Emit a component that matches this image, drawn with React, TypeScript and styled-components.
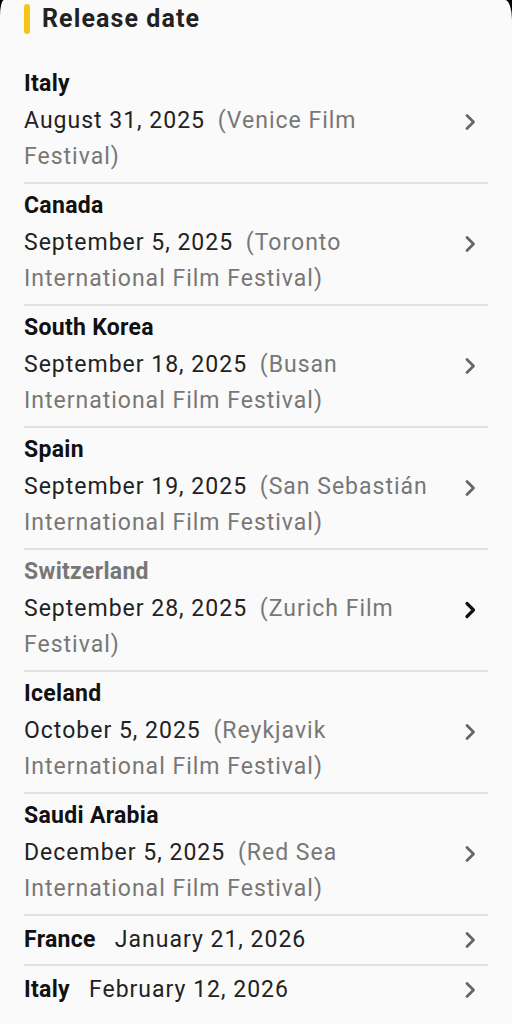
import styled, { createGlobalStyle } from "styled-components";

type Release = {
    id: number;
    country: string;
    date: string;
    venue?: string;
    muted?: boolean;
};

const releases: Release[] = [
    { id: 1, country: "Italy", date: "August 31, 2025", venue: "(Venice Film Festival)" },
    { id: 2, country: "Canada", date: "September 5, 2025", venue: "(Toronto International Film Festival)" },
    { id: 3, country: "South Korea", date: "September 18, 2025", venue: "(Busan International Film Festival)" },
    { id: 4, country: "Spain", date: "September 19, 2025", venue: "(San Sebastián International Film Festival)" },
    { id: 5, country: "Switzerland", date: "September 28, 2025", venue: "(Zurich Film Festival)", muted: true },
    { id: 6, country: "Iceland", date: "October 5, 2025", venue: "(Reykjavik International Film Festival)" },
    { id: 7, country: "Saudi Arabia", date: "December 5, 2025", venue: "(Red Sea International Film Festival)" },
    { id: 8, country: "France", date: "January 21, 2026" },
    { id: 9, country: "Italy", date: "February 12, 2026" }
];

const GlobalStyle = createGlobalStyle`
    html, body {
        margin: 0;
        padding: 0;
        background: #000;
    }
    body {
        font-family: Roboto, "Noto Sans", sans-serif;
    }
`;

const Sheet = styled.div`
    min-height: 1024px;
    background: #fafafa;
    border-top-left-radius: 4px 16px;
    border-top-right-radius: 7px 20px;
    padding: 1px 24px 0;
    box-sizing: border-box;
`;

const Header = styled.div`
    display: flex;
    align-items: center;
    column-gap: 12px;
    height: 36px;
    margin-bottom: 25px;
`;

const Accent = styled.div`
    width: 6px;
    height: 30px;
    border-radius: 3px;
    background: #f5c518;
`;

const HeaderTitle = styled.h2`
    margin: 0;
    font-size: 25px;
    line-height: 36px;
    font-weight: 700;
    letter-spacing: 1.1px;
    color: #222222;
`;

const List = styled.div`
    display: flex;
    flex-direction: column;
`;

const Row = styled.div<{ $inline?: boolean }>`
    display: flex;
    align-items: ${({ $inline }) => ($inline ? "center" : "flex-start")};
    column-gap: 12px;
    padding: ${({ $inline }) => ($inline ? "6px 6px 6px 0" : "7px 6px 7px 0")};
    border-bottom: 2px solid #e2e2e2;

    &:last-child {
        border-bottom: none;
    }
`;

const RowText = styled.div<{ $inline?: boolean }>`
    flex: 1;
    display: flex;
    flex-direction: ${({ $inline }) => ($inline ? "row" : "column")};
    align-items: ${({ $inline }) => ($inline ? "center" : "stretch")};
    column-gap: 19px;
    row-gap: 4px;
`;

const Country = styled.div<{ $muted?: boolean; $inline?: boolean }>`
    font-size: 23px;
    line-height: ${({ $inline }) => ($inline ? "36px" : "30px")};
    font-weight: 700;
    letter-spacing: 0.3px;
    color: ${({ $muted }) => ($muted ? "#777777" : "#111111")};
`;

const DateLine = styled.div`
    font-size: 23px;
    line-height: 36px;
    letter-spacing: 1px;
    color: #222222;
`;

const Venue = styled.span`
    margin-left: 6px;
    color: #777777;
`;

const Chevron = styled.svg<{ $inline?: boolean; $active?: boolean }>`
    flex: none;
    width: 24px;
    height: 24px;
    margin-top: ${({ $inline }) => ($inline ? "0" : "41px")};
    stroke: ${({ $active }) => ($active ? "#111111" : "#666666")};
    stroke-width: ${({ $active }) => ($active ? "3.2" : "2.8")};
`;

function ChevronRight({ inline, active }: { inline?: boolean; active?: boolean }) {
    return (
        <Chevron $inline={inline} $active={active} viewBox="0 0 24 24" fill="none" strokeLinecap="round" strokeLinejoin="round">
            <polyline points="9,5.5 15.5,12 9,18.5" />
        </Chevron>
    );
}

export default function App() {
    return (
        <>
            <GlobalStyle />
            <Sheet>
                <Header>
                    <Accent />
                    <HeaderTitle>Release date</HeaderTitle>
                </Header>
                <List>
                    {releases.map(item => {
                        const inline = !item.venue;
                        return (
                            <Row key={item.id} $inline={inline}>
                                <RowText $inline={inline}>
                                    <Country $muted={item.muted} $inline={inline}>{item.country}</Country>
                                    <DateLine>
                                        {item.date}
                                        {item.venue && <>{" "}<Venue>{item.venue}</Venue></>}
                                    </DateLine>
                                </RowText>
                                <ChevronRight inline={inline} active={item.muted} />
                            </Row>
                        );
                    })}
                </List>
            </Sheet>
        </>
    );
}
